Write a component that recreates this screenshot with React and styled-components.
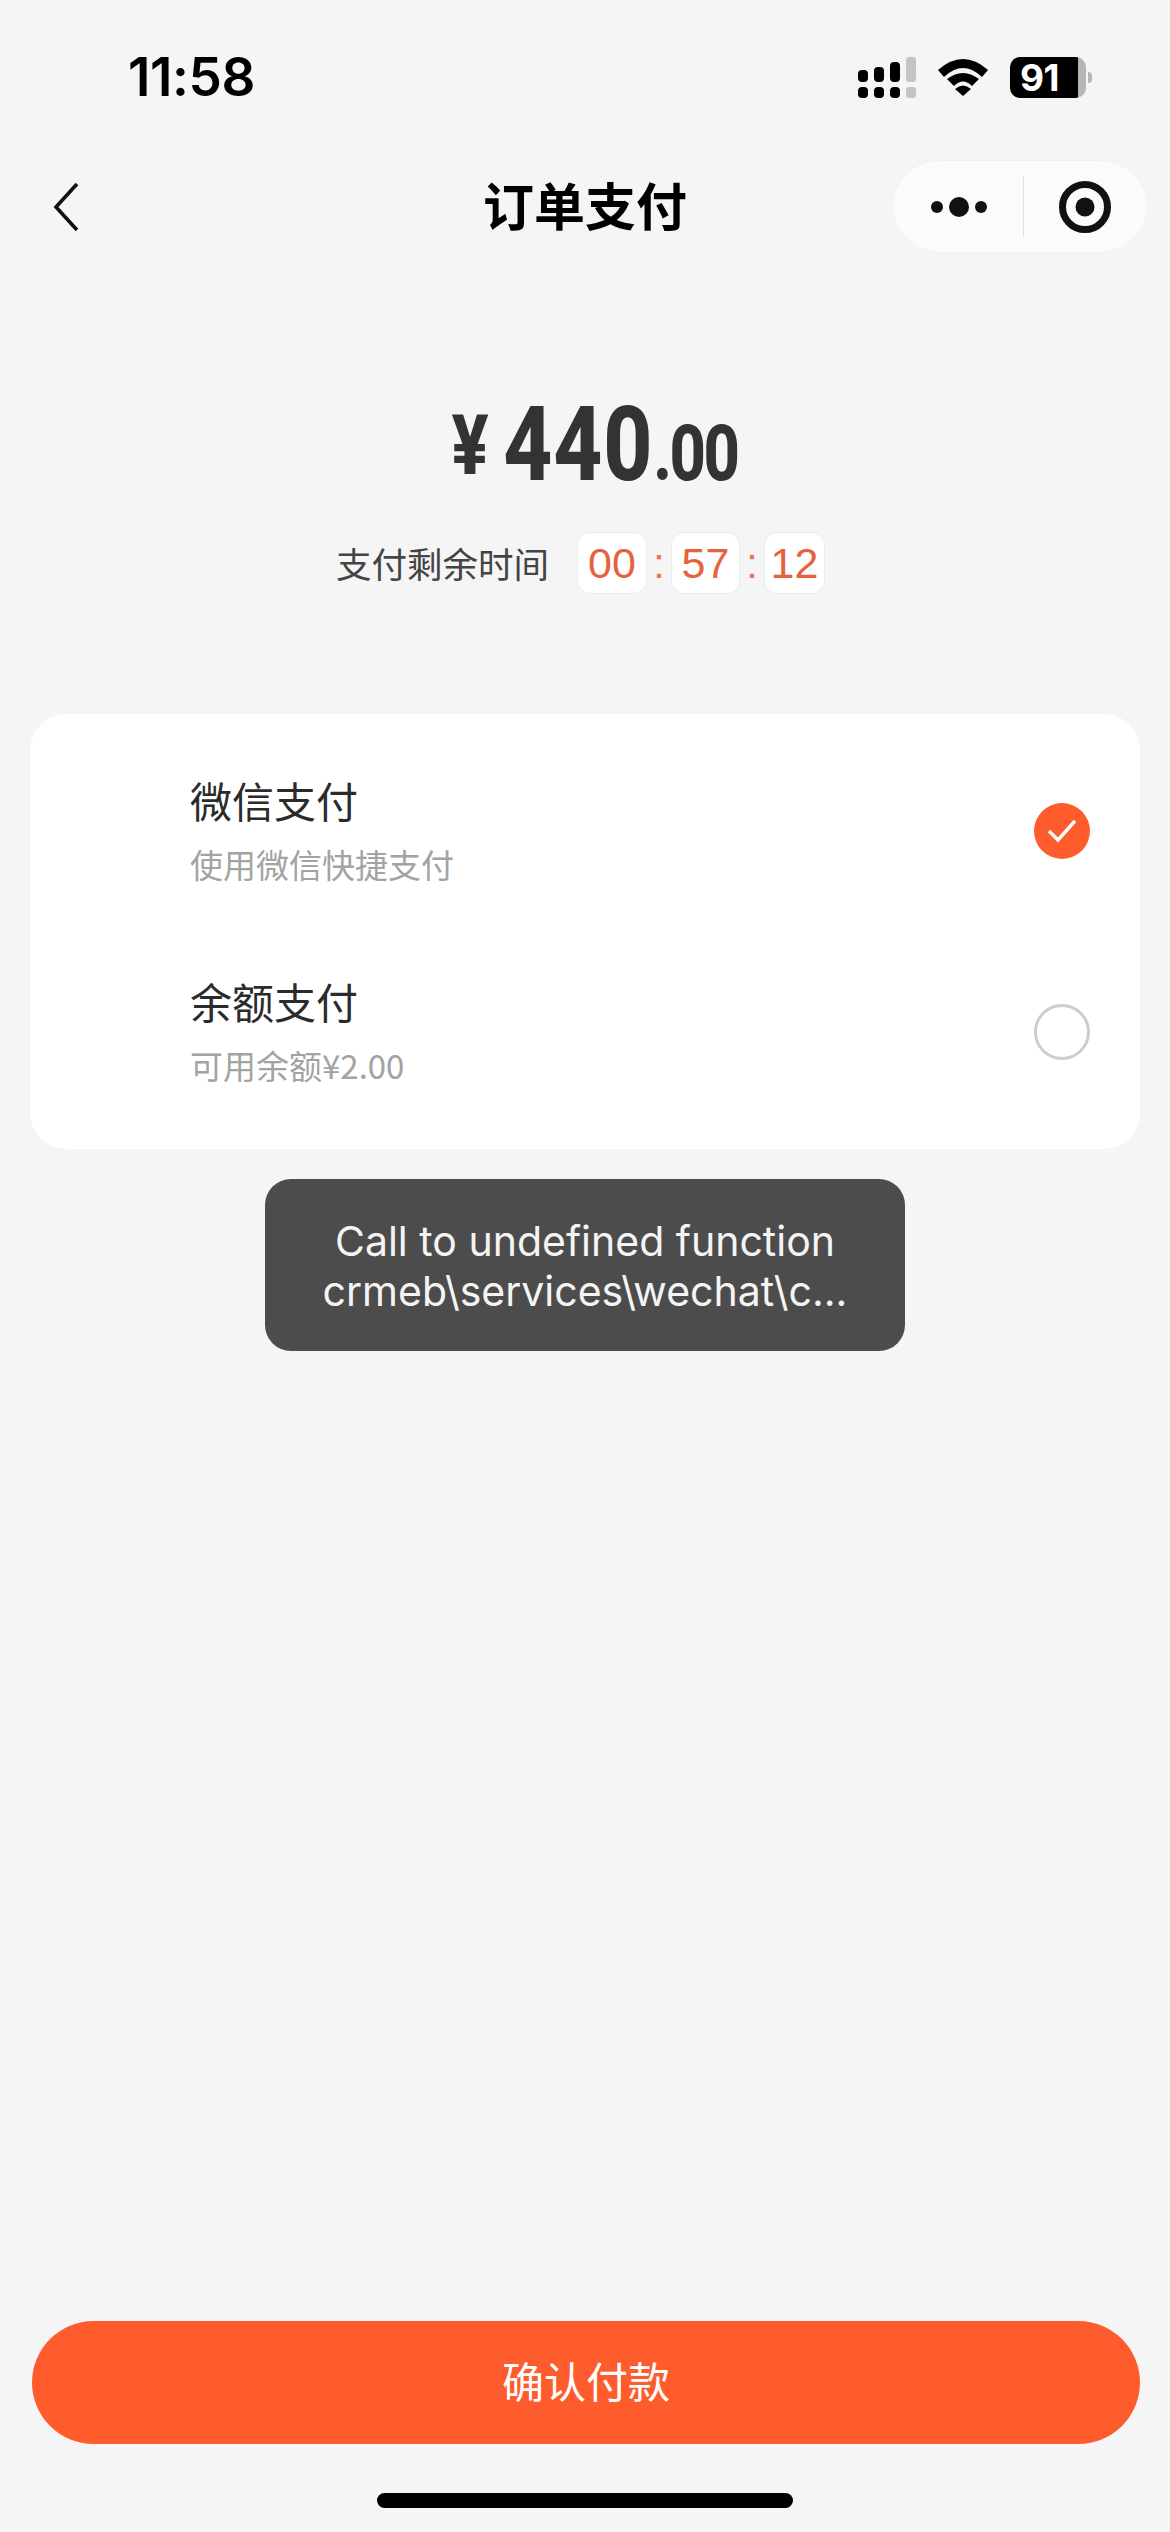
import React from "react";
import styled, { createGlobalStyle } from "styled-components";

const Global = createGlobalStyle`
  html, body { margin: 0; padding: 0; background: #f5f5f5; }
  * { box-sizing: border-box; }
`;
const LATIN = `Inter, "Noto Sans CJK SC", sans-serif`;
const CJK = `"Noto Sans CJK SC", Inter, sans-serif`;

const Page = styled.div`
  position: relative;
  width: 1170px;
  height: 2532px;
  background: #f5f5f5;
  display: flex;
  flex-direction: column;
  overflow: hidden;
`;
const StatusBar = styled.div`
  height: 160px;
  padding: 57px 79px 0 128px;
  display: flex;
  justify-content: space-between;
  align-items: flex-start;
`;
const Time = styled.div`
  font: 600 53px/40px ${LATIN};
  letter-spacing: -0.4px;
  color: #000;
`;
const StatusIcons = styled.div`
  display: flex;
  align-items: center;
  height: 41px;
  gap: 22px;
  margin-right: 5px;
`;
const Battery = styled.div`
  position: relative;
  width: 76px;
  height: 41px;
  border-radius: 10px;
  background: linear-gradient(90deg, #000 89%, #b5b5b5 89%);
  color: #fff;
  font: 700 37px/41px ${LATIN};
  padding-left: 10px;
  letter-spacing: -0.5px;
  &::after {
    content: "";
    position: absolute;
    right: -6px;
    top: 15px;
    width: 4px;
    height: 11px;
    border-radius: 0 4px 4px 0;
    background: #b5b5b5;
  }
`;
const Nav = styled.div`
  height: 93px;
  padding: 0 22px;
  display: grid;
  grid-template-columns: 1fr auto 1fr;
  align-items: center;
`;
const Back = styled.svg`
  width: 26px;
  height: 50px;
  margin-left: 31px;
  justify-self: start;
`;
const Title = styled.div`
  font: 700 51px/60px ${CJK};
  color: #000;
  margin-top: -5px;
`;
const Capsule = styled.div`
  justify-self: end;
  width: 256px;
  height: 93px;
  border-radius: 47px;
  background: #fbfbfb;
  border: 1px solid #f1f1f1;
  display: flex;
  align-items: center;
`;
const CapsuleSlot = styled.div`
  flex: 1;
  height: 100%;
  display: flex;
  align-items: center;
  justify-content: center;
  padding-left: ${(p) => p.$nudge || 0}px;
`;
const CapsuleRule = styled.div`
  width: 1px;
  height: 61px;
  background: #e4e4e4;
`;
const AmountRow = styled.div`
  margin-top: 149px;
  height: 80px;
  padding-left: 23px;
  display: flex;
  justify-content: center;
  align-items: flex-end;
  transform: scaleX(0.82);
  color: #333;
  font-family: Roboto, sans-serif;
  font-weight: 800;
  line-height: 1;
`;
const Currency = styled.span`
  font-size: 84px;
  line-height: 72px;
  margin-right: 18px;
`;
const Whole = styled.span`
  font-size: 104px;
  line-height: 74px;
  height: 74px;
  letter-spacing: 1px;
`;
const Fraction = styled.span`
  font-size: 77px;
  line-height: 55px;
  height: 55px;
  letter-spacing: -3px;
`;
const Countdown = styled.div`
  margin-top: 50px;
  padding-left: 336px;
  height: 62px;
  display: flex;
  align-items: center;
`;
const CountLabel = styled.span`
  font: 400 35.5px/62px ${CJK};
  color: #444;
  margin-right: 28px;
`;
const TimeBox = styled.span`
  width: ${(p) => p.$w}px;
  height: 62px;
  text-align: center;
  background: #fff;
  border: 1px solid #ebebeb;
  border-radius: 13px;
  font: 400 43px/60px "Liberation Sans", sans-serif;
  color: #e5623d;
`;
const Colon = styled.span`
  width: 24px;
  text-align: center;
  font: 400 43px/56px "Liberation Sans", sans-serif;
  color: #e5623d;
  opacity: 0.85;
`;
const Card = styled.div`
  margin: 120px 30px 0;
  height: 435px;
  background: #fff;
  border-radius: 36px;
  padding-top: 37px;
  display: flex;
  flex-direction: column;
  gap: 47px;
`;
const Method = styled.div`
  height: 154px;
  padding: 0 50px 0 160px;
  display: flex;
  align-items: center;
  justify-content: space-between;
`;
const MethodText = styled.div`
  display: flex;
  flex-direction: column;
`;
const MethodName = styled.div`
  font: 400 42px/56px ${CJK};
  color: #2b2b2b;
`;
const MethodNote = styled.div`
  margin-top: 15px;
  font: 400 33px/42px ${CJK};
  color: #a3a3a3;
`;
const Radio = styled.div`
  width: 56px;
  height: 56px;
  margin-top: 6px;
  border-radius: 50%;
  background: ${(p) => (p.$on ? "#ff5c2d" : "#fff")};
  border: ${(p) => (p.$on ? "none" : "3px solid #cdcdcd")};
  display: flex;
  align-items: center;
  justify-content: center;
`;
const Toast = styled.div`
  position: absolute;
  left: 265px;
  top: 1179px;
  width: 640px;
  height: 172px;
  border-radius: 26px;
  background: #4c4c4c;
  color: #f4f4f4;
  padding-top: 37px;
  text-align: center;
  font: 400 41px/50px ${LATIN};
`;
const ToastLine = styled.div`
  white-space: nowrap;
`;
const PayButton = styled.div`
  margin: auto 30px 0 32px;
  height: 123px;
  border-radius: 62px;
  background: #ff5c2d;
  color: #fff;
  font: 400 42px/117px ${CJK};
  text-align: center;
`;
const HomeBar = styled.div`
  width: 416px;
  height: 15px;
  margin: 49px auto 24px;
  border-radius: 8px;
  background: #000;
`;

const Signal = () => (
  <svg width="58" height="41" viewBox="0 0 58 41">
    <g fill="#000">
      <rect x="0" y="13" width="10" height="12" rx="4" />
      <rect x="16" y="10" width="10" height="15" rx="4" />
      <rect x="32" y="5" width="10" height="20" rx="4" />
      <rect x="0" y="30" width="10" height="11" rx="4" />
      <rect x="16" y="30" width="10" height="11" rx="4" />
      <rect x="32" y="30" width="10" height="11" rx="4" />
    </g>
    <g fill="#c4c4c4">
      <rect x="48" y="0" width="10" height="25" rx="3" />
      <rect x="48" y="30" width="10" height="11" rx="3" />
    </g>
  </svg>
);
const Wifi = () => (
  <svg width="50" height="38" viewBox="0 0 50 38" fill="#000">
    <path d="M0 11 Q25 -11 50 11 L44 18 Q25 0 6 18 Z" />
    <path d="M9 20 Q25 8 41 20 L34 27 Q25 18 16 27 Z" />
    <path d="M17 30 Q25 23 33 30 L25 37 Z" />
  </svg>
);

export default function App() {
  return (
    <Page>
      <Global />
      <StatusBar>
        <Time>11:58</Time>
        <StatusIcons>
          <Signal />
          <Wifi />
          <Battery>91</Battery>
        </StatusIcons>
      </StatusBar>
      <Nav>
        <Back viewBox="0 0 26 50" fill="none" stroke="#111" strokeWidth="3.6">
          <polyline points="24,2 3,25 24,48" />
        </Back>
        <Title>订单支付</Title>
        <Capsule>
          <CapsuleSlot $nudge={6}>
            <svg width="60" height="24" viewBox="0 0 60 24" fill="#111">
              <circle cx="6" cy="12" r="6" />
              <circle cx="28" cy="12" r="10" />
              <circle cx="50" cy="12" r="6" />
            </svg>
          </CapsuleSlot>
          <CapsuleRule />
          <CapsuleSlot>
            <svg width="52" height="52" viewBox="0 0 52 52">
              <circle cx="26" cy="26" r="22.5" fill="none" stroke="#111" strokeWidth="7" />
              <circle cx="26" cy="26" r="9.5" fill="#111" />
            </svg>
          </CapsuleSlot>
        </Capsule>
      </Nav>
      <AmountRow>
        <Currency>¥</Currency>
        <Whole>440</Whole>
        <Fraction>.00</Fraction>
      </AmountRow>
      <Countdown>
        <CountLabel>支付剩余时间</CountLabel>
        <TimeBox $w={70}>00</TimeBox>
        <Colon>:</Colon>
        <TimeBox $w={69}>57</TimeBox>
        <Colon>:</Colon>
        <TimeBox $w={61}>12</TimeBox>
      </Countdown>
      <Card>
        <Method>
          <MethodText>
            <MethodName>微信支付</MethodName>
            <MethodNote>使用微信快捷支付</MethodNote>
          </MethodText>
          <Radio $on>
            <svg width="56" height="56" viewBox="0 0 56 56" fill="none" stroke="#fff" strokeWidth="3.4">
              <polyline points="15,28 24,37 41,18" />
            </svg>
          </Radio>
        </Method>
        <Method>
          <MethodText>
            <MethodName>余额支付</MethodName>
            <MethodNote>可用余额¥2.00</MethodNote>
          </MethodText>
          <Radio />
        </Method>
      </Card>
      <Toast>
        <ToastLine>Call to undefined function</ToastLine>
        <ToastLine>crmeb\services\wechat\c...</ToastLine>
      </Toast>
      <PayButton>确认付款</PayButton>
      <HomeBar />
    </Page>
  );
}
